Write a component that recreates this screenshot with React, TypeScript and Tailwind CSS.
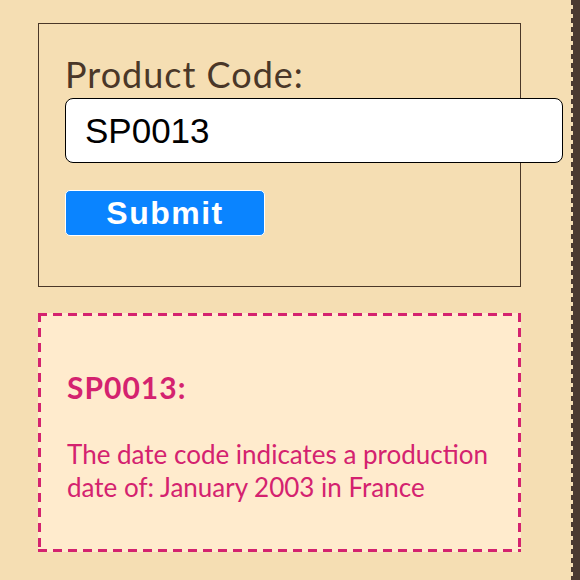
import { useState } from 'react'

export default function App() {
  const [code, setCode] = useState('SP0013')

  return (
    <div className="w-[580px] h-[580px] bg-[#f5deb3] flex overflow-hidden font-['Lato',sans-serif]">
      <div className="flex-1 pl-[38px] pt-[23px]">
        {/* Form */}
        <div className="w-[483px] h-[264px] border border-[#4a3728] pl-[26px] pt-[30px]">
          <label className="block text-[36px] leading-[40px] tracking-[1px] text-[#4a3728]">Product Code:</label>
          <input
            value={code}
            onChange={(e) => setCode(e.target.value)}
            className="mt-[4px] w-[498px] h-[65px] bg-white border-[1.5px] border-black rounded-[8px] px-[19px] text-[35px] text-black font-['Liberation_Sans',Arial,sans-serif] outline-none"
          />
          <button className="mt-[27px] block w-[200px] h-[46px] bg-[#0a84ff] border border-white rounded-[5px] text-white text-[32px] tracking-[1.5px] font-bold leading-none font-['Liberation_Sans',Arial,sans-serif]">
            Submit
          </button>
        </div>

        {/* Result, dashed edge drawn with gradients for longer dashes */}
        <div className="mt-[26px] w-[483px] h-[239px] p-[3px] pl-[29px] pr-[13px] pt-[58px] text-[#d4226f] [background:repeating-linear-gradient(90deg,#d4226f_0_9px,transparent_9px_15px)_left_top/100%_3px_no-repeat,repeating-linear-gradient(90deg,#d4226f_0_9px,transparent_9px_15px)_left_bottom/100%_3px_no-repeat,repeating-linear-gradient(180deg,#d4226f_0_9px,transparent_9px_15px)_left_top/3px_100%_no-repeat,repeating-linear-gradient(180deg,#d4226f_0_9px,transparent_9px_15px)_right_top/3px_100%_no-repeat,#ffebcd]">
          <h2 className="text-[30px] leading-[32px] tracking-[1px] font-bold">SP0013:</h2>
          <p className="mt-[35px] text-[26px] leading-[33px]">
            The date code indicates a production date of: January 2003 in France
          </p>
        </div>
      </div>

      {/* Stamp edge */}
      <div className="w-[2px] h-full bg-[repeating-linear-gradient(to_bottom,#4b3a30_0px,#4b3a30_5px,transparent_5px,transparent_9px)]" />
      <div className="w-[7px] h-full bg-[#4b3a30]" />
    </div>
  )
}
